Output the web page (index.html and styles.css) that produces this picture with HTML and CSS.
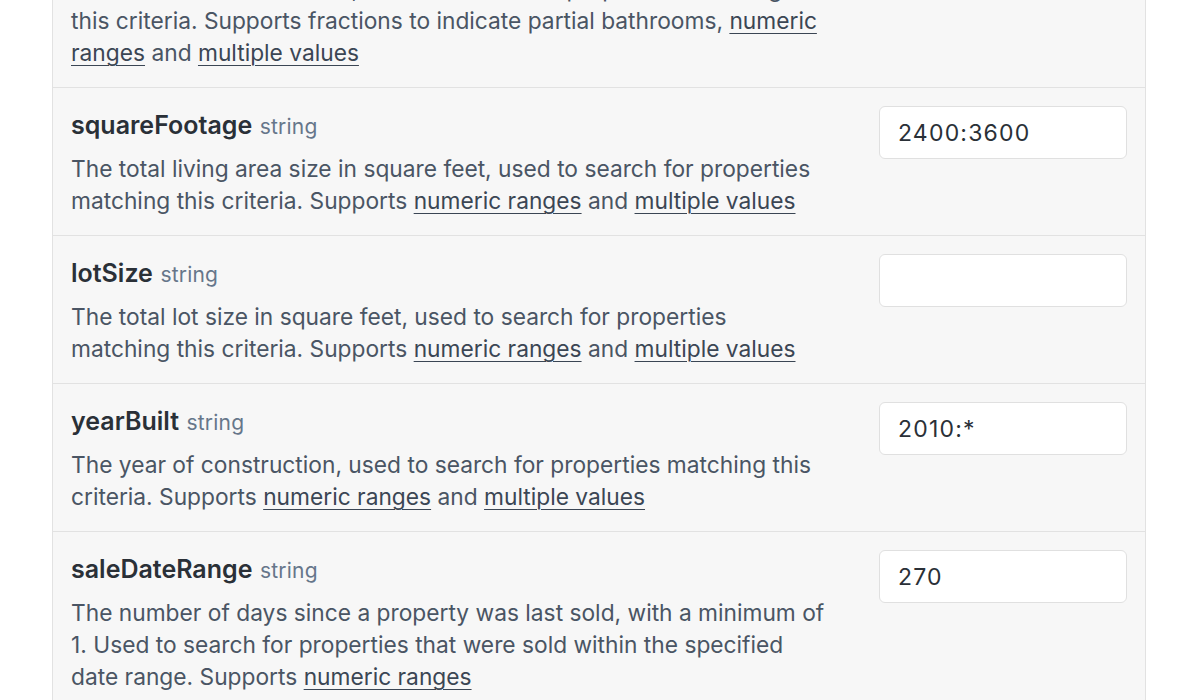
FILE: index.html
```html
<!DOCTYPE html>
<html lang="en">
<head>
<meta charset="utf-8">
<title>Property search parameters</title>
<link rel="stylesheet" href="styles.css">
</head>
<body>
<div class="panel">
  <div class="row">
    <div class="info">
      <div class="head"><span class="name">bathrooms</span> <span class="type">string</span></div>
      <p class="desc">The number of bathrooms, used to search for properties matching this&nbsp;criteria. Supports fractions to indicate partial bathrooms, <a href="#">numeric ranges</a> and <a href="#">multiple values</a></p>
    </div>
    <input class="field" type="text" value="">
  </div>
  <div class="row">
    <div class="info">
      <div class="head"><span class="name">squareFootage</span> <span class="type">string</span></div>
      <p class="desc">The total living area size in square feet, used to search for properties matching this criteria. Supports <a href="#">numeric ranges</a> and <a href="#">multiple values</a></p>
    </div>
    <input class="field" type="text" value="2400:3600">
  </div>
  <div class="row">
    <div class="info">
      <div class="head"><span class="name">lotSize</span> <span class="type">string</span></div>
      <p class="desc">The total lot size in square feet, used to search for properties matching&nbsp;this criteria. Supports <a href="#">numeric ranges</a> and <a href="#">multiple values</a></p>
    </div>
    <input class="field" type="text" value="">
  </div>
  <div class="row">
    <div class="info">
      <div class="head"><span class="name">yearBuilt</span> <span class="type">string</span></div>
      <p class="desc">The year of construction, used to search for properties matching this criteria. Supports <a href="#">numeric ranges</a> and <a href="#">multiple values</a></p>
    </div>
    <input class="field" type="text" value="2010:*">
  </div>
  <div class="row">
    <div class="info">
      <div class="head"><span class="name">saleDateRange</span> <span class="type">string</span></div>
      <p class="desc">The number of days since a property was last sold, with a minimum of 1. Used to search for properties that were sold within the specified date range. Supports <a href="#">numeric ranges</a></p>
    </div>
    <input class="field" type="text" value="270">
  </div>
</div>
</body>
</html>
```
FILE: styles.css
```css
html, body {
  margin: 0;
  padding: 0;
  background: #ffffff;
  font-family: Inter, "Noto Sans", "Liberation Sans", sans-serif;
}

.panel {
  margin: -92px 0 0 52px;
  width: 1092px;
  background: #f7f7f7;
  border-left: 1px solid #e2e2e2;
  border-right: 1px solid #e2e2e2;
}

.row {
  display: flex;
  align-items: flex-start;
  gap: 49px;
  padding: 18px 18px 18px 18px;
  border-bottom: 1px solid #e2e2e2;
}

.info {
  flex: 1;
  min-width: 0;
}

.head {
  line-height: 38px;
  height: 38px;
}

.name {
  font-size: 25px;
  font-weight: 600;
  color: #2a3037;
}

.type {
  font-size: 21px;
  letter-spacing: 0.2px;
  color: #66768a;
  margin-left: 3px;
}

.desc {
  margin: 9px 0 0 0;
  font-size: 22.75px;
  line-height: 32px;
  color: #4a5564;
}

.desc a {
  color: #3b4654;
  text-decoration: underline;
  text-decoration-thickness: 1px;
  text-underline-offset: 4px;
}

.field {
  box-sizing: border-box;
  flex: none;
  width: 248px;
  height: 53px;
  margin: 0;
  padding: 0 18px;
  background: #ffffff;
  border: 1px solid #e0e0e0;
  border-radius: 6px;
  font-family: inherit;
  font-size: 23px;
  letter-spacing: 1.2px;
  color: #2a3037;
  outline: none;
}
```
